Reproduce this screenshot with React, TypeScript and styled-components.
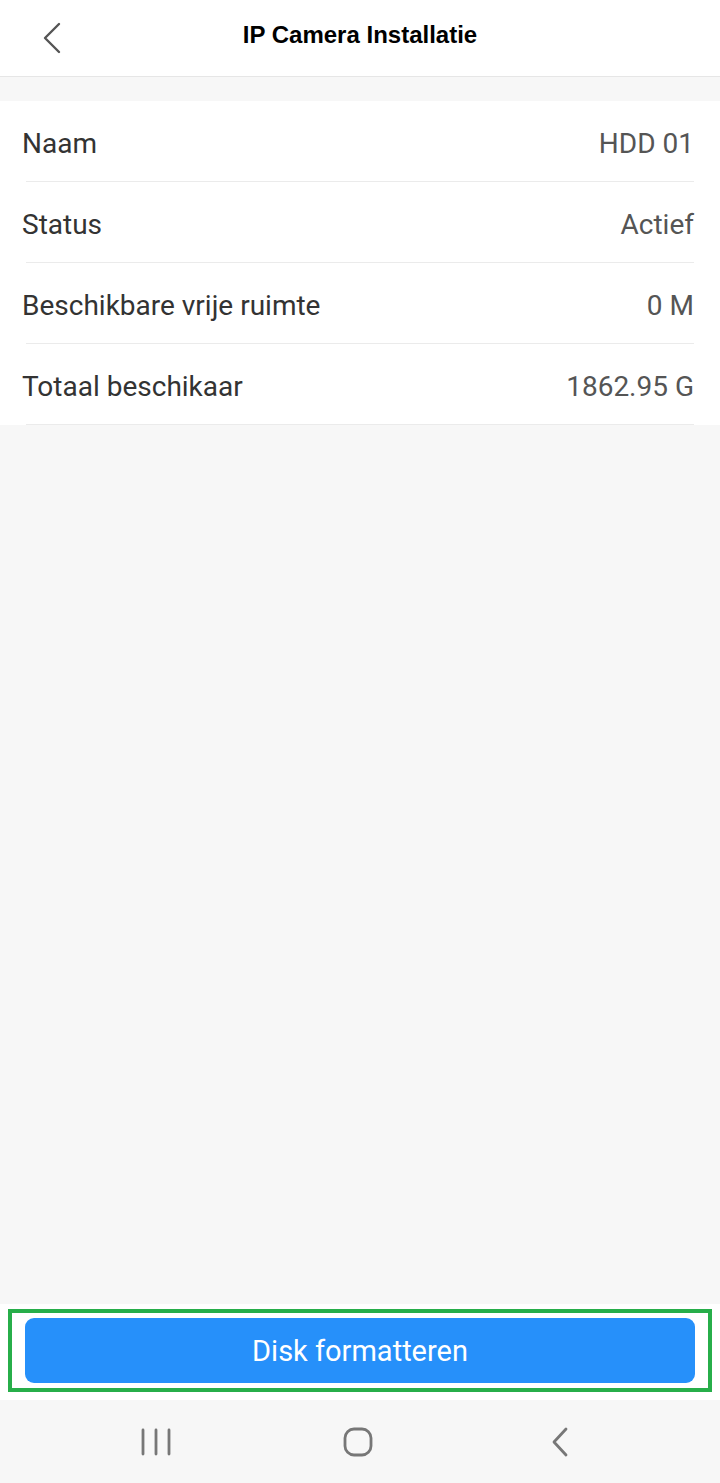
import React from 'react'
import styled, { createGlobalStyle } from 'styled-components'

const rows = [
  { label: 'Naam', value: 'HDD 01' },
  { label: 'Status', value: 'Actief' },
  { label: 'Beschikbare vrije ruimte', value: '0 M' },
  { label: 'Totaal beschikaar', value: '1862.95 G' },
]

export default function App() {
  return (
    <>
      <GlobalStyle />
      <Screen>
        <Header>
          <BackButton aria-label="Terug">
            <svg width="22" height="32" viewBox="0 0 22 32" fill="none">
              <path d="M18 2 L4 16 L18 30" stroke="#555" strokeWidth="2.4" strokeLinecap="round" strokeLinejoin="round" />
            </svg>
          </BackButton>
          <Title>IP Camera Installatie</Title>
        </Header>

        <Spacer />

        <List>
          {rows.map(row => (
            <Row key={row.label}>
              <Label>{row.label}</Label>
              <Value>{row.value}</Value>
            </Row>
          ))}
        </List>

        <Filler />

        <ActionBar>
          <Highlight>
            <PrimaryButton>Disk formatteren</PrimaryButton>
          </Highlight>
        </ActionBar>

        <NavBar>
          <NavIcon>
            <svg width="30" height="28" viewBox="0 0 30 28" fill="none">
              <path d="M2 2 V26 M15 2 V26 M28 2 V26" stroke="#777" strokeWidth="2.8" strokeLinecap="round" />
            </svg>
          </NavIcon>
          <NavIcon>
            <svg width="30" height="30" viewBox="0 0 30 30" fill="none">
              <rect x="2" y="2" width="26" height="26" rx="9" stroke="#777" strokeWidth="2.8" />
            </svg>
          </NavIcon>
          <NavIcon>
            <svg width="20" height="30" viewBox="0 0 20 30" fill="none">
              <path d="M16 2 L4 15 L16 28" stroke="#777" strokeWidth="2.8" strokeLinecap="round" strokeLinejoin="round" />
            </svg>
          </NavIcon>
        </NavBar>
      </Screen>
    </>
  )
}

const GlobalStyle = createGlobalStyle`
  html, body {
    margin: 0;
    padding: 0;
    background: #f7f7f7;
  }
  * {
    box-sizing: border-box;
  }
`

const Screen = styled.div`
  display: flex;
  flex-direction: column;
  width: 720px;
  height: 1483px;
  background: #f7f7f7;
  font-family: Roboto, 'Noto Sans', sans-serif;
`

const Header = styled.header`
  position: relative;
  display: flex;
  align-items: center;
  justify-content: center;
  height: 77px;
  background: #fff;
  border-bottom: 1px solid #e6e6e6;
`

const BackButton = styled.button`
  position: absolute;
  left: 41px;
  top: 22px;
  display: flex;
  padding: 0;
  border: none;
  background: transparent;
`

const Title = styled.h1`
  margin: 0 0 6px;
  font-family: 'Liberation Sans', Arial, sans-serif;
  font-size: 24px;
  font-weight: 700;
  color: #000;
`

const Spacer = styled.div`
  height: 24px;
`

const List = styled.div`
  background: #fff;
`

const Row = styled.div`
  display: flex;
  align-items: center;
  justify-content: space-between;
  height: 81px;
  margin-right: 26px;
  padding: 5px 0 0 22px;
  border-bottom: 1px solid #ebebeb;
  border-image: linear-gradient(to right, transparent 27px, #ebebeb 27px) 1;
`

const Label = styled.span`
  font-size: 28px;
  color: #333;
`

const Value = styled.span`
  font-size: 28px;
  color: #555;
`

const Filler = styled.div`
  flex: 1;
`

const ActionBar = styled.div`
  padding: 5px 0 8px;
  background: #fff;
`

const Highlight = styled.div`
  margin: 0 8px;
  padding: 5px 13px;
  border: 4px solid #27ae4a;
`

const PrimaryButton = styled.button`
  display: flex;
  align-items: center;
  justify-content: center;
  width: 100%;
  height: 65px;
  border: none;
  border-radius: 9px;
  background: #2690fa;
  color: #fff;
  font-family: Roboto, 'Noto Sans', sans-serif;
  font-size: 29px;
`

const NavBar = styled.nav`
  display: flex;
  align-items: center;
  gap: 142px;
  height: 83px;
  padding: 0 0 0 126px;
  background: #f7f7f7;
`

const NavIcon = styled.div`
  display: flex;
  align-items: center;
  justify-content: center;
  width: 60px;
  height: 40px;
`
